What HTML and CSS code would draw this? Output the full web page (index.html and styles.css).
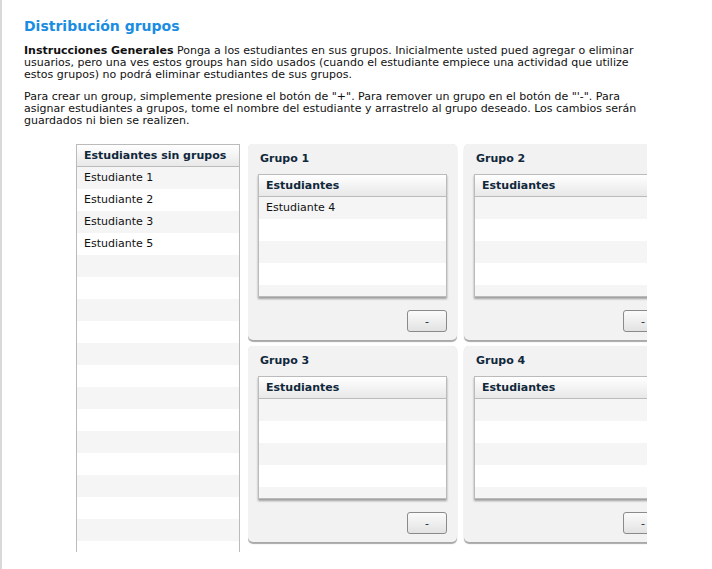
FILE: index.html
```html
<!DOCTYPE html>
<html lang="es">

<head>
    <meta charset="UTF-8">
    <meta name="viewport" content="width=device-width, initial-scale=1.0">
    <title>Distribución grupos</title>
    <link rel="stylesheet" href="styles.css">
</head>

<body>
    <div class="page">
        <h1>Distribución grupos</h1>

        <p><b>Instrucciones Generales</b> Ponga a los estudiantes en sus grupos. Inicialmente usted pued agregar o eliminar usuarios, pero una ves estos groups han sido usados (cuando el estudiante empiece una actividad que utilize estos grupos) no podrá eliminar estudiantes de sus grupos.</p>

        <p>Para crear un group, simplemente presione el botón de "+". Para remover un grupo en el botón de "'-". Para asignar estudiantes a grupos, tome el nombre del estudiante y arrastrelo al grupo deseado. Los cambios serán guardados ni bien se realizen.</p>

        <div class="workspace">
            <!-- Students without group -->
            <div class="unassigned">
                <div class="list-header">Estudiantes sin grupos</div>
                <ul class="rows">
                    <li>Estudiante 1</li>
                    <li>Estudiante 2</li>
                    <li>Estudiante 3</li>
                    <li>Estudiante 5</li>
                    <li></li><li></li><li></li><li></li><li></li><li></li>
                    <li></li><li></li><li></li><li></li><li></li><li></li>
                    <li></li><li></li><li></li>
                </ul>
            </div>

            <!-- Groups -->
            <div class="groups">
                <div class="group">
                    <h2>Grupo 1</h2>
                    <div class="group-table">
                        <div class="list-header">Estudiantes</div>
                        <ul class="rows">
                            <li>Estudiante 4</li>
                            <li></li><li></li><li></li><li></li>
                        </ul>
                    </div>
                    <div class="group-actions"><button type="button">-</button></div>
                </div>
                <div class="group">
                    <h2>Grupo 2</h2>
                    <div class="group-table">
                        <div class="list-header">Estudiantes</div>
                        <ul class="rows">
                            <li></li><li></li><li></li><li></li><li></li>
                        </ul>
                    </div>
                    <div class="group-actions"><button type="button">-</button></div>
                </div>
                <div class="group">
                    <h2>Grupo 3</h2>
                    <div class="group-table">
                        <div class="list-header">Estudiantes</div>
                        <ul class="rows">
                            <li></li><li></li><li></li><li></li><li></li>
                        </ul>
                    </div>
                    <div class="group-actions"><button type="button">-</button></div>
                </div>
                <div class="group">
                    <h2>Grupo 4</h2>
                    <div class="group-table">
                        <div class="list-header">Estudiantes</div>
                        <ul class="rows">
                            <li></li><li></li><li></li><li></li><li></li>
                        </ul>
                    </div>
                    <div class="group-actions"><button type="button">-</button></div>
                </div>
            </div>
        </div>
    </div>
</body>

</html>
```

FILE: styles.css
```css
/* Global styles */
* {
    padding: 0;
    margin: 0;
    box-sizing: border-box;
}

body {
    font-family: "DejaVu Sans", Verdana, sans-serif;
    font-size: 11px;
    color: #111;
    background-color: #fff;
}

.page {
    border-left: 2px solid #d9d9d9;
    padding: 17px 0 0 22px;
    width: 680px;
    min-height: 569px;
}

h1 {
    font-size: 14px;
    line-height: 18px;
    color: #1a8de2;
    margin-bottom: 10px;
}

p {
    line-height: 12px;
    margin-bottom: 10px;
    width: 630px;
}

/* Two columns: unassigned list and groups */
.workspace {
    display: flex;
    gap: 8px;
    margin-left: 52px;
    margin-top: 17px;
}

.list-header {
    height: 22px;
    line-height: 21px;
    padding-left: 7px;
    font-weight: bold;
    color: #10283b;
    background: linear-gradient(#fff, #e8e8e8);
    border-bottom: 1px solid #bbb;
}

.rows {
    list-style: none;
}

.rows li {
    height: 22px;
    line-height: 21px;
    padding-left: 7px;
    background-color: #fff;
}

.rows li:nth-child(odd) {
    background-color: #f5f5f5;
}

.unassigned {
    width: 164px;
    height: 408px;
    overflow: hidden;
    border: 1px solid #bbb;
    border-bottom: none;
}

/* Groups grid, clipped on the right */
.groups {
    width: 399px;
    height: 402px;
    overflow: hidden;
    display: grid;
    grid-template-columns: 209px 209px;
    grid-auto-rows: 196px;
    gap: 6px 7px;
}

.group {
    background-color: #f2f2f2;
    border-radius: 5px;
    box-shadow: 0 2px 1px #a8a8a8, 0 0 1px #ddd;
    padding: 8px 10px;
}

.group h2 {
    font-size: 11px;
    line-height: 14px;
    color: #10283b;
    padding-left: 2px;
    margin-bottom: 8px;
}

.group-table {
    height: 123px;
    overflow: hidden;
    background-color: #fff;
    border: 1px solid #bbb;
    box-shadow: 0 2px 2px rgba(0, 0, 0, 0.35);
}

.group-actions {
    display: flex;
    justify-content: flex-end;
    margin-top: 13px;
}

.group-actions button {
    width: 40px;
    height: 22px;
    font-family: inherit;
    font-size: 11px;
    color: #10283b;
    border: 1px solid #8a8a8a;
    border-radius: 3px;
    background: linear-gradient(#fbfbfb, #e2e2e2);
    cursor: pointer;
}
```
